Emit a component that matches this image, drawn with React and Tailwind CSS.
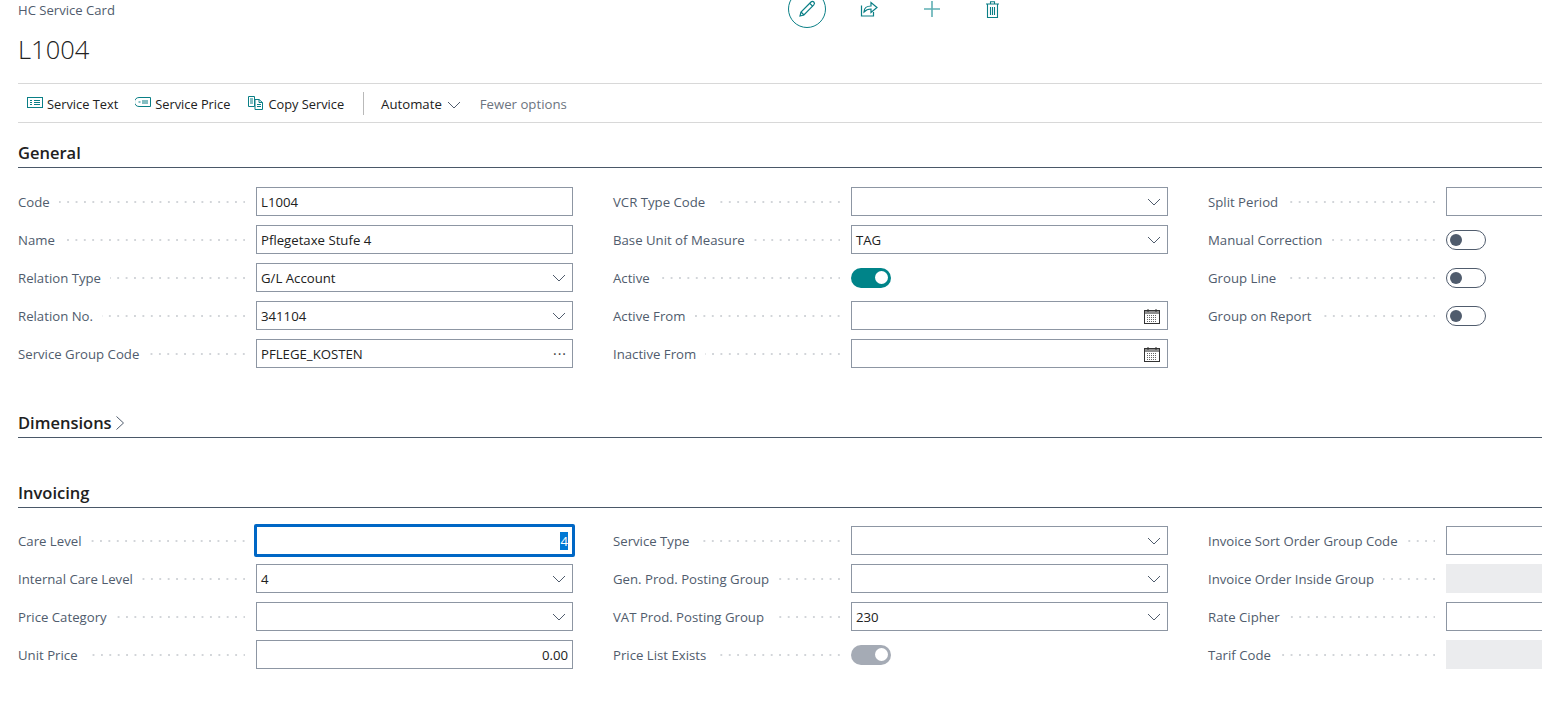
const Chevron = ({ className = "" }) => (
  <svg width="14" height="8" viewBox="0 0 14 8" fill="none" stroke="#505c6d" strokeWidth="1" className={className}>
    <path d="M1 1l6 6 6-6" />
  </svg>
);

const Calendar = () => (
  <svg width="16" height="16" viewBox="0 0 16 16" fill="none" className="mr-[3px]">
    <rect x=".5" y="2.5" width="15" height="13" fill="#fff" stroke="#333" />
    <rect x="1" y="3" width="14" height="3" fill="#8f8f8f" />
    <path d="M4 1v3M12 1v3" stroke="#333" />
    <path d="M3 7.5h10M3 9.5h10M3 11.5h10M3 13.5h10" stroke="#666" strokeDasharray="1 1" />
  </svg>
);

const Dots = () => (
  <div className="h-[2px] flex-1 ml-[9px] bg-[linear-gradient(to_left,#d2d5d9_2px,transparent_2px)] bg-[length:8.4px_2px] bg-repeat-x bg-right" />
);

const Box = ({ value, kind, align, disabled, focus }) => (
  <div
    className={`flex items-center h-[29px] w-[317px] shrink-0 pl-[4px] pr-[4px] text-[#212121] ${
      disabled ? "bg-[#ebecee]" : "bg-white border border-[#8d96a3]"
    } ${focus ? "border-[3px] border-[#0067c5] rounded-[2px] h-[33px] w-[321px] -mx-[2px] pr-[3px]" : ""}`}
  >
    <span className={`flex-1 ${align === "right" ? "text-right" : ""}`}>
      {focus ? <span className="bg-[#0078d4] text-white">{value}</span> : value}
    </span>
    {kind === "select" && <Chevron className="mr-[2px]" />}
    {kind === "date" && <Calendar />}
    {kind === "more" && <span className="text-[#3a3a3a] text-[14px] leading-none tracking-[1px] mr-[1px]">···</span>}
  </div>
);

const Toggle = ({ state }) => {
  if (state === "on")
    return (
      <div className="flex items-center justify-end h-[20px] w-[40px] rounded-full bg-[#008489] pr-[3px]">
        <div className="h-[13px] w-[13px] rounded-full bg-white" />
      </div>
    );
  if (state === "locked")
    return (
      <div className="flex items-center justify-end h-[20px] w-[40px] rounded-full bg-[#a5abb5] pr-[3px]">
        <div className="h-[13px] w-[13px] rounded-full bg-white" />
      </div>
    );
  return (
    <div className="flex items-center h-[20px] w-[40px] rounded-full bg-white border border-[#505c6d] pl-[3px]">
      <div className="h-[12px] w-[12px] rounded-full bg-[#505c6d]" />
    </div>
  );
};

const Row = ({ label, toggle, ...rest }) => (
  <div className="flex items-center h-[29px] w-[555px]">
    <div className="flex items-center w-[227px] shrink-0 text-[#505c6d]">
      <span className="whitespace-nowrap">{label}</span>
      <Dots />
    </div>
    <div className="w-[11px] shrink-0" />
    {toggle ? <Toggle state={toggle} /> : <Box {...rest} />}
  </div>
);

const Column = ({ rows }) => (
  <div className="flex flex-col gap-[9px]">
    {rows.map((r) => (
      <Row key={r.label} {...r} />
    ))}
  </div>
);

const Section = ({ title, chevron, className = "", children }) => (
  <section className={className}>
    <div className="flex items-center h-[31px] border-b border-[#4a5868] text-[#212121]">
      <h2 className="text-[16.5px] font-semibold leading-[28px] pt-[2px]">{title}</h2>
      {chevron && (
        <svg width="10" height="16" viewBox="0 0 10 16" fill="none" stroke="#505c6d" className="ml-[3px] mt-[1px]">
          <path d="M1.5 1.5l7 6.5-7 6.5" />
        </svg>
      )}
    </div>
    {children}
  </section>
);

const general = [
  [
    { label: "Code", value: "L1004" },
    { label: "Name", value: "Pflegetaxe Stufe 4" },
    { label: "Relation Type", value: "G/L Account", kind: "select" },
    { label: "Relation No.", value: "341104", kind: "select" },
    { label: "Service Group Code", value: "PFLEGE_KOSTEN", kind: "more" },
  ],
  [
    { label: "VCR Type Code", kind: "select" },
    { label: "Base Unit of Measure", value: "TAG", kind: "select" },
    { label: "Active", toggle: "on" },
    { label: "Active From", kind: "date" },
    { label: "Inactive From", kind: "date" },
  ],
  [
    { label: "Split Period" },
    { label: "Manual Correction", toggle: "off" },
    { label: "Group Line", toggle: "off" },
    { label: "Group on Report", toggle: "off" },
  ],
];

const invoicing = [
  [
    { label: "Care Level", value: "4", align: "right", focus: true },
    { label: "Internal Care Level", value: "4", kind: "select" },
    { label: "Price Category", kind: "select" },
    { label: "Unit Price", value: "0.00", align: "right" },
  ],
  [
    { label: "Service Type", kind: "select" },
    { label: "Gen. Prod. Posting Group", kind: "select" },
    { label: "VAT Prod. Posting Group", value: "230", kind: "select" },
    { label: "Price List Exists", toggle: "locked" },
  ],
  [
    { label: "Invoice Sort Order Group Code" },
    { label: "Invoice Order Inside Group", disabled: true },
    { label: "Rate Cipher" },
    { label: "Tarif Code", disabled: true },
  ],
];

const teal = "#0a7f86";

const ActionItem = ({ icon, label, className = "" }) => (
  <div className={`flex items-center gap-[4px] whitespace-nowrap text-[#212121] ${className}`}>
    {icon}
    <span>{label}</span>
  </div>
);

export default function App() {
  return (
    <div className="relative h-[715px] w-[1542px] overflow-hidden bg-white pl-[18px] font-['Open_Sans',sans-serif] text-[13.2px] leading-[18px]">
      <header className="relative h-[84px] border-b border-[#d8d8d8]">
        <div className="pt-[1px] text-[13.1px] text-[#505c6d]">HC Service Card</div>
        <div className="mt-[12px] text-[25.5px] font-light leading-[36px] text-[#212121]">L1004</div>
        <div className="absolute left-[770px] top-[-10px] flex items-center">
          <div className="flex h-[38px] w-[38px] items-center justify-center rounded-full border border-[#0a7f86]">
            <svg width="20" height="20" viewBox="0 0 20 20" fill="none" stroke={teal} strokeWidth="1.2">
              <path d="M3 17l1-4L14 3a1.6 1.6 0 0 1 2.8 2.8L6.9 16z" />
              <path d="M4 13l3 3M12.8 4.3l3 3" />
            </svg>
          </div>
          <svg width="18" height="16" viewBox="0 0 18 16" fill="none" stroke={teal} strokeWidth="1.2" className="ml-[34px]">
            <path d="M1.5 4.5v10.5h12v-4" />
            <path d="M4 11c0-4 3-6 7-6V1.5l6 5-6 5V8c-3 0-5 .8-7 3z" />
          </svg>
          <svg width="18" height="18" viewBox="0 0 18 18" fill="none" stroke="#5fb0b4" strokeWidth="1.6" className="ml-[45px]">
            <path d="M9 1v16M1 9h16" />
          </svg>
          <svg width="13" height="17" viewBox="0 0 13 17" fill="none" stroke={teal} strokeWidth="1.1" className="ml-[45px]">
            <path d="M0 3h13M4.5 3V.8h4V3M1.5 3v13.5h10V3M4.5 6v8M6.5 6v8M8.5 6v8" />
          </svg>
        </div>
      </header>

      <nav className="flex h-[39px] items-center border-b border-[#d8d8d8] pl-[9px] pt-[2px] text-[12.8px]">
        <ActionItem
          label="Service Text"
          icon={
            <svg width="16" height="12" viewBox="0 0 16 12" fill="none" stroke={teal} className="-mt-[3px]">
              <rect x=".5" y=".5" width="15" height="10" />
              <path d="M3 3.5h2M7 3.5h6M3 5.5h2M7 5.5h6M3 7.5h2M7 7.5h6" />
            </svg>
          }
        />
        <ActionItem
          className="ml-[17px]"
          label="Service Price"
          icon={
            <svg width="16" height="12" viewBox="0 0 16 12" fill="none" stroke={teal} className="-mt-[3px]">
              <path d="M4 .5h11.5v9H4a4.5 4.5 0 0 1 0-9z" />
              <path d="M7 4h6M7 6h6M3.5 5h2" />
            </svg>
          }
        />
        <ActionItem
          className="ml-[18px] gap-[5px]"
          label="Copy Service"
          icon={
            <svg width="15" height="14" viewBox="0 0 15 14" fill="none" stroke={teal} className="-mt-[3px]">
              <path d="M.5.5h6v10h-6zM2 3h3M2 5h3M2 7h3" />
              <path d="M7 3.5h4l3.5 3v7H7zM11 3.5v3h3.5M9 8.5h4M9 10.5h4" />
            </svg>
          }
        />
        <div className="ml-[19px] -mt-[2px] h-[23px] w-px bg-[#b9b9b9]" />
        <div className="ml-[17px] text-[13.2px] text-[#212121]">Automate</div>
        <Chevron className="ml-[5px] mt-[1px]" />
        <div className="ml-[19px] text-[13.2px] text-[#6c7480]">Fewer options</div>
      </nav>

      <Section title="General" className="mt-[14px]">
        <div className="mt-[19px] flex gap-[40px]">
          {general.map((c, i) => (
            <Column key={i} rows={c} />
          ))}
        </div>
      </Section>

      <Section title="Dimensions" chevron className="mt-[39px]" />

      <Section title="Invoicing" className="mt-[39px]">
        <div className="mt-[18px] flex gap-[40px]">
          {invoicing.map((c, i) => (
            <Column key={i} rows={c} />
          ))}
        </div>
      </Section>
    </div>
  );
}
